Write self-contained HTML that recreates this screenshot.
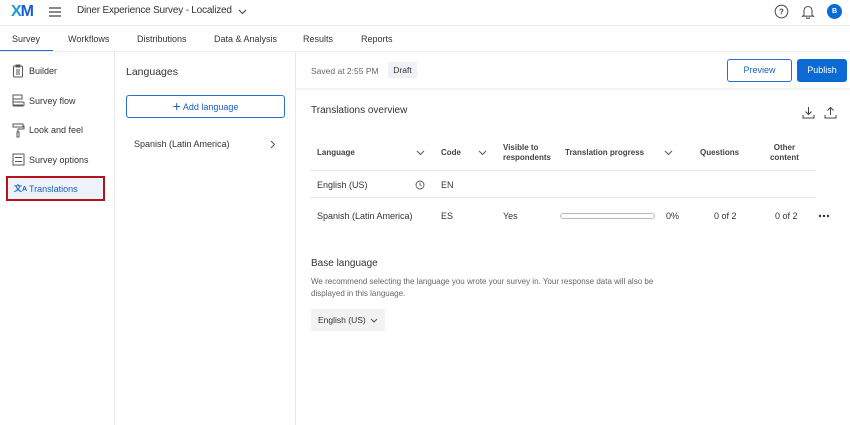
<!DOCTYPE html><html><head><style>
*{margin:0;padding:0;box-sizing:border-box}
body{width:850px;height:425px;overflow:hidden;background:#fff;font-family:"Liberation Sans",sans-serif;color:#333;position:relative;font-size:9px}
.a{position:absolute;white-space:nowrap}
.side .a{font-size:9px;color:#333}
svg{position:absolute}
</style></head><body>
<div class="a" style="left:11px;top:3px;font-size:16px;font-weight:bold;letter-spacing:-1px;color:#1a9bd8">X<span style="color:#1a5ad8">M</span></div>
<svg style="left:48px;top:6px" width="14" height="12"><path d="M1 2h12M1 6h12M1 10h12" stroke="#444" stroke-width="1.3"/></svg>
<div class="a" style="left:77px;top:5px;font-size:10px;color:#333;letter-spacing:-.2px">Diner Experience Survey - Localized</div>
<svg style="left:238px;top:8px" width="9" height="7"><path d="M1 2l3.5 3.5L8 2" stroke="#444" fill="none" stroke-width="1.1"/></svg>
<svg style="left:774px;top:4px" width="15" height="15"><circle cx="7.5" cy="7.5" r="6.3" stroke="#555" fill="none" stroke-width="1.1"/><text x="7.5" y="10.5" font-size="8" text-anchor="middle" fill="#555" font-family="Liberation Sans" font-weight="bold">?</text></svg>
<svg style="left:801px;top:4px" width="14" height="15"><path d="M3 11V6.5a4 4 0 018 0V11l1.5 1.2h-11z M5.5 13.2a1.5 1.5 0 003 0" stroke="#555" fill="none" stroke-width="1.1"/></svg>
<div class="a" style="left:827px;top:4px;width:15px;height:15px;border-radius:50%;background:#0b6ad4;color:#fff;font-size:7px;font-weight:bold;text-align:center;line-height:15px">B</div>
<div class="a" style="left:0;top:25px;width:850px;height:1px;background:#ececec"></div>
<div class="a" style="left:12px;top:34px">Survey</div>
<div class="a" style="left:68px;top:34px">Workflows</div>
<div class="a" style="left:137px;top:34px">Distributions</div>
<div class="a" style="left:214px;top:34px">Data &amp; Analysis</div>
<div class="a" style="left:303px;top:34px">Results</div>
<div class="a" style="left:361px;top:34px">Reports</div>
<div class="a" style="left:0;top:50px;width:53px;height:2px;background:#2a6dd0"></div>
<div class="a" style="left:0;top:51px;width:850px;height:1px;background:#ececec"></div>
<div class="a" style="left:114px;top:52px;width:1px;height:373px;background:#e8e8e8"></div>
<div class="a" style="left:295px;top:52px;width:1px;height:373px;background:#e8e8e8"></div>
<div class="side">
<svg style="left:12px;top:64px" width="12" height="14"><rect x="1.5" y="2" width="9" height="11" rx="1" stroke="#555" fill="none"/><path d="M4 1h4v2H4z M4 6h4M4 8h4M4 10h4" stroke="#555" fill="none" stroke-width=".9"/></svg>
<div class="a" style="left:29px;top:66px">Builder</div>
<svg style="left:11px;top:94px" width="14" height="13"><path d="M2 1h9v4H2zM2 5v6h10" stroke="#555" fill="none"/><rect x="2" y="8" width="11" height="4" rx="1" stroke="#555" fill="none"/></svg>
<div class="a" style="left:29px;top:96px">Survey flow</div>
<svg style="left:12px;top:123px" width="13" height="15"><rect x="1" y="1" width="10" height="3" stroke="#555" fill="none"/><path d="M11 3h1v3H6v3M5 9h2v5H5z" stroke="#555" fill="none"/></svg>
<div class="a" style="left:29px;top:125px">Look and feel</div>
<svg style="left:12px;top:153px" width="13" height="13"><rect x="1" y="1" width="11" height="11" stroke="#555" fill="none"/><path d="M3 4.5h7M3 8.5h7" stroke="#555"/></svg>
<div class="a" style="left:29px;top:155px">Survey options</div>
<div class="a" style="left:6px;top:176px;width:99px;height:25px;border:2px solid #b5121b;background:#eef3fb"></div>
<div class="a" style="left:14px;top:183px;font-size:8px;color:#1b5fbf;font-weight:bold">文<span style="font-size:7px">A</span></div>
<div class="a" style="left:29px;top:184px;color:#1b5fbf">Translations</div>
</div>
<div class="a" style="left:126px;top:66px;font-size:10.5px">Languages</div>
<div class="a" style="left:126px;top:95px;width:159px;height:23px;border:1px solid #2a6dd0;border-radius:3px;color:#1b5fbf;text-align:center;line-height:21px"><span style="font-size:14px;vertical-align:-1px">+</span> Add language</div>
<div class="a" style="left:134px;top:139px">Spanish (Latin America)</div>
<svg style="left:270px;top:140px" width="6" height="9"><path d="M1 1l3.5 3.5L1 8" stroke="#555" fill="none"/></svg>
<div class="a" style="left:311px;top:66px;color:#666;font-size:8.5px">Saved at 2:55 PM</div>
<div class="a" style="left:388px;top:62px;width:29px;height:16px;background:#eef2f8;border-radius:2px;font-size:8.5px;text-align:center;line-height:16px">Draft</div>
<div class="a" style="left:727px;top:59px;width:65px;height:23px;border:1px solid #2a6dd0;border-radius:3px;color:#1b5fbf;text-align:center;line-height:21px;font-size:9px">Preview</div>
<div class="a" style="left:797px;top:59px;width:50px;height:23px;background:#0b6ad4;border-radius:3px;color:#fff;text-align:center;line-height:23px;font-size:9px">Publish</div>
<div class="a" style="left:296px;top:88px;width:554px;height:2px;background:#f4f4f4"></div>
<div class="a" style="left:311px;top:105px;font-size:10px">Translations overview</div>
<svg style="left:802px;top:106px" width="13" height="13"><path d="M6.5 1v7M3.5 5.5l3 3 3-3M1 9v3h11V9" stroke="#444" fill="none"/></svg>
<svg style="left:824px;top:106px" width="13" height="13"><path d="M6.5 9V2M3.5 4.5l3-3 3 3M1 9v3h11V9" stroke="#444" fill="none"/></svg>
<div style="font-size:8px;color:#444;font-weight:bold">
<div class="a" style="left:317px;top:148px">Language</div>
<div class="a" style="left:441px;top:148px">Code</div>
<div class="a" style="left:503px;top:143px;line-height:10px">Visible to<br>respondents</div>
<div class="a" style="left:565px;top:148px">Translation progress</div>
<div class="a" style="left:700px;top:148px">Questions</div>
<div class="a" style="left:770px;top:143px;line-height:10px;text-align:center">Other<br>content</div>
</div>
<svg style="left:416px;top:150px" width="9" height="6"><path d="M1 1l3.5 3.5L8 1" stroke="#555" fill="none"/></svg>
<svg style="left:478px;top:150px" width="9" height="6"><path d="M1 1l3.5 3.5L8 1" stroke="#555" fill="none"/></svg>
<svg style="left:664px;top:150px" width="9" height="6"><path d="M1 1l3.5 3.5L8 1" stroke="#555" fill="none"/></svg>
<div class="a" style="left:310px;top:170px;width:506px;height:1px;background:#e4e4e4"></div>
<div class="a" style="left:317px;top:180px">English (US)</div>
<svg style="left:415px;top:180px" width="10" height="10"><circle cx="5" cy="5" r="4" stroke="#555" fill="none" stroke-width=".9"/><path d="M5 2.5V5l1.5 1" stroke="#555" fill="none" stroke-width=".9"/></svg>
<div class="a" style="left:441px;top:180px">EN</div>
<div class="a" style="left:310px;top:197px;width:506px;height:1px;background:#e4e4e4"></div>
<div class="a" style="left:317px;top:211px">Spanish (Latin America)</div>
<div class="a" style="left:441px;top:211px">ES</div>
<div class="a" style="left:503px;top:211px">Yes</div>
<div class="a" style="left:560px;top:213px;width:95px;height:6px;border:1px solid #bbb;border-radius:3px"></div>
<div class="a" style="left:666px;top:211px">0%</div>
<div class="a" style="left:714px;top:211px">0 of 2</div>
<div class="a" style="left:775px;top:211px">0 of 2</div>
<svg style="left:818px;top:214px" width="12" height="4"><circle cx="2" cy="2" r="1.2" fill="#333"/><circle cx="6" cy="2" r="1.2" fill="#333"/><circle cx="10" cy="2" r="1.2" fill="#333"/></svg>
<div class="a" style="left:311px;top:258px;font-size:10px">Base language</div>
<div class="a" style="left:311px;top:276px;font-size:8px;color:#666;line-height:12px">We recommend selecting the language you wrote your survey in. Your response data will also be<br>displayed in this language.</div>
<div class="a" style="left:311px;top:309px;width:74px;height:22px;background:#f2f2f2;border-radius:3px"></div>
<div class="a" style="left:318px;top:315px;font-size:8.5px">English (US)</div>
<svg style="left:370px;top:318px" width="8" height="5"><path d="M1 1l3 3 3-3" stroke="#555" fill="none"/></svg>
</body></html>
